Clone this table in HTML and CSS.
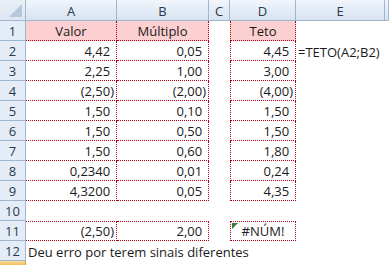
FILE: index.html
```
<!DOCTYPE html>
<html lang="pt">
<head>
<meta charset="utf-8">
<link rel="stylesheet" href="styles.css">
</head>
<body>
<div class="sheet">
  <div class="corner"><span class="tri"></span></div>
  <div class="ch">A</div><div class="ch">B</div><div class="ch">C</div><div class="ch">D</div><div class="ch">E</div><div class="ch last"></div>

  <div class="rh">1</div>
  <div class="c a hd">Valor</div><div class="c b hd">Múltiplo</div><div class="c"></div><div class="c d hd">Teto</div><div class="c"></div><div class="c"></div>

  <div class="rh">2</div>
  <div class="c a n">4,42<i>)</i></div><div class="c b n">0,05<i>)</i></div><div class="c"></div><div class="c d n">4,45<i>)</i></div><div class="c t">=TETO(A2;B2)</div><div class="c"></div>

  <div class="rh">3</div>
  <div class="c a n">2,25<i>)</i></div><div class="c b n">1,00<i>)</i></div><div class="c"></div><div class="c d n">3,00<i>)</i></div><div class="c"></div><div class="c"></div>

  <div class="rh">4</div>
  <div class="c a n">(2,50)</div><div class="c b n">(2,00)</div><div class="c"></div><div class="c d n">(4,00)</div><div class="c"></div><div class="c"></div>

  <div class="rh">5</div>
  <div class="c a n">1,50<i>)</i></div><div class="c b n">0,10<i>)</i></div><div class="c"></div><div class="c d n">1,50<i>)</i></div><div class="c"></div><div class="c"></div>

  <div class="rh">6</div>
  <div class="c a n">1,50<i>)</i></div><div class="c b n">0,50<i>)</i></div><div class="c"></div><div class="c d n">1,50<i>)</i></div><div class="c"></div><div class="c"></div>

  <div class="rh">7</div>
  <div class="c a n">1,50<i>)</i></div><div class="c b n">0,60<i>)</i></div><div class="c"></div><div class="c d n">1,80<i>)</i></div><div class="c"></div><div class="c"></div>

  <div class="rh">8</div>
  <div class="c a n">0,2340<i>)</i></div><div class="c b n">0,01<i>)</i></div><div class="c"></div><div class="c d n">0,24<i>)</i></div><div class="c"></div><div class="c"></div>

  <div class="rh">9</div>
  <div class="c a n">4,3200<i>)</i></div><div class="c b n">0,05<i>)</i></div><div class="c"></div><div class="c d n">4,35<i>)</i></div><div class="c"></div><div class="c"></div>

  <div class="rh">10</div>
  <div class="c"></div><div class="c"></div><div class="c"></div><div class="c"></div><div class="c"></div><div class="c"></div>

  <div class="rh">11</div>
  <div class="c a n top">(2,50)</div><div class="c b n top">2,00<i>)</i></div><div class="c"></div><div class="c d err top"><span class="flag"></span>#NÚM!</div><div class="c"></div><div class="c"></div>

  <div class="rh">12</div>
  <div class="c t">Deu erro por terem sinais diferentes</div><div class="c"></div><div class="c"></div><div class="c"></div><div class="c"></div><div class="c"></div>

  <div class="rh sel"></div>
  <div class="c"></div><div class="c"></div><div class="c"></div><div class="c"></div><div class="c"></div><div class="c"></div>
</div>
</body>
</html>
```
FILE: styles.css
```
html, body {
  margin: 0;
  padding: 0;
  background: #fff;
}
body {
  font-family: "Open Sans", "Liberation Sans", sans-serif;
  font-size: 13px;
  color: #1a1a1a;
  overflow: hidden;
  width: 389px;
  height: 265px;
}
.sheet {
  display: grid;
  grid-template-columns: 26px 91px 92px 21px 66px 89px 4px;
  grid-template-rows: 21px repeat(12, 20px) 4px;
  width: 389px;
}
.corner {
  position: relative;
  box-sizing: border-box;
  background: linear-gradient(#e9eff7, #dde6f2);
  border-right: 1px solid #9eb6ce;
  border-bottom: 1px solid #9eb6ce;
}
.tri {
  position: absolute;
  right: 3px;
  bottom: 3px;
  width: 0;
  height: 0;
  border-left: 13px solid transparent;
  border-bottom: 13px solid #b6c8dd;
}
.ch {
  box-sizing: border-box;
  background: linear-gradient(#f2f6fb 0%, #e4ecf6 45%, #d9e3f0 100%);
  border-right: 1px solid #9eb6ce;
  border-bottom: 1px solid #9eb6ce;
  display: flex;
  align-items: center;
  justify-content: center;
  color: #2b3a4a;
  padding-top: 1px;
}
.rh {
  box-sizing: border-box;
  background: #e4ecf7;
  border-right: 1px solid #9eb6ce;
  border-bottom: 1px solid #9eb6ce;
  display: flex;
  align-items: flex-end;
  justify-content: center;
  padding-bottom: 0;
  color: #2b3a4a;
}
.rh.sel {
  background: linear-gradient(#f9d99f, #f1c15f);
  border-right-color: #f29536;
  border-bottom: 0;
}
.c {
  box-sizing: border-box;
  display: flex;
  align-items: flex-end;
  padding: 0 2px 0 2px;
  white-space: nowrap;
  min-width: 0;
}
.t {
  overflow: visible;
  position: relative;
  z-index: 1;
}
.a, .b, .d {
  border-right: 1px dotted #b0001a;
  border-bottom: 1px dotted #b0001a;
}
.d {
  border-left: 1px dotted #b0001a;
}
.top {
  border-top: 1px dotted #b0001a;
}
.hd {
  background: #fcd0d0;
  justify-content: center;
}
.n {
  justify-content: flex-end;
}
.n i {
  font-style: normal;
  visibility: hidden;
}
.err {
  justify-content: center;
  position: relative;
}
.flag {
  position: absolute;
  left: 1px;
  top: 1px;
  width: 0;
  height: 0;
  border-top: 6px solid #2e7d32;
  border-right: 6px solid transparent;
}
```
